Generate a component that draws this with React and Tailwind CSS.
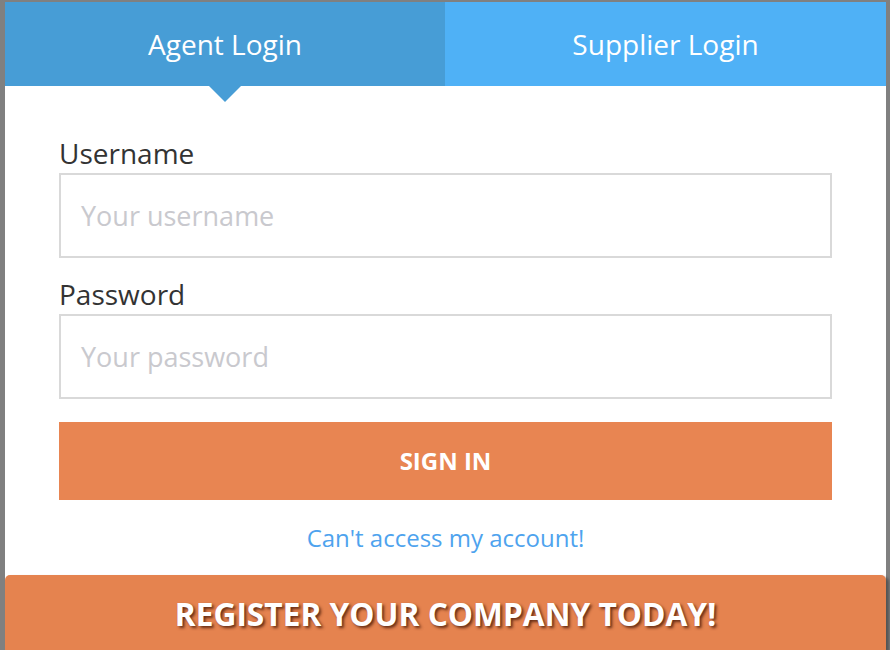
export default function App() {
  const font = { fontFamily: '"Open Sans", "Noto Sans", sans-serif' };
  return (
    <div
      className="w-[890px] h-[650px] bg-[#808080] pt-[2px] pl-[5px] pr-[4px] overflow-hidden"
      style={font}
    >
      <div className="bg-white h-[648px] flex flex-col">
        <div className="flex h-[84px] shrink-0">
          <div className="relative w-[440px] bg-[#479dd6] flex items-center justify-center text-white text-[28px]">
            Agent Login
            <div className="absolute left-1/2 -translate-x-1/2 top-full w-0 h-0 border-l-[16px] border-r-[16px] border-t-[16px] border-l-transparent border-r-transparent border-t-[#479dd6]" />
          </div>
          <div className="flex-1 bg-[#4fb1f6] flex items-center justify-center text-white text-[28px]">
            Supplier Login
          </div>
        </div>
        <div className="px-[54px] pt-[47px] flex flex-col">
          <label className="text-[28px] leading-[40px] text-[#333]">Username</label>
          <div className="h-[85px] border-2 border-[#d9d9d9] flex items-center pl-[20px] pt-[2px] text-[27px] text-[#c9c9ce]">
            Your username
          </div>
          <label className="mt-[16px] text-[28px] leading-[40px] text-[#333]">Password</label>
          <div className="h-[85px] border-2 border-[#d9d9d9] flex items-center pl-[20px] pt-[2px] text-[27px] text-[#c9c9ce]">
            Your password
          </div>
          <div className="mt-[23px] h-[78px] bg-[#e88552] flex items-center justify-center text-white font-bold text-[24px]">
            SIGN IN
          </div>
          <div className="mt-[20px] text-center text-[24px] leading-[36px] text-[#4ea3ee]">
            Can't access my account!
          </div>
        </div>
        <div className="mt-auto h-[75px] bg-[#e5834f] rounded-t-[5px] shadow-[3px_2px_3px_rgba(0,0,0,0.35)] flex justify-center pt-[17px] text-white font-bold text-[31.7px] leading-[44px] [text-shadow:2px_2px_3px_rgba(80,30,10,0.85)]">
          REGISTER YOUR COMPANY TODAY!
        </div>
      </div>
    </div>
  );
}
